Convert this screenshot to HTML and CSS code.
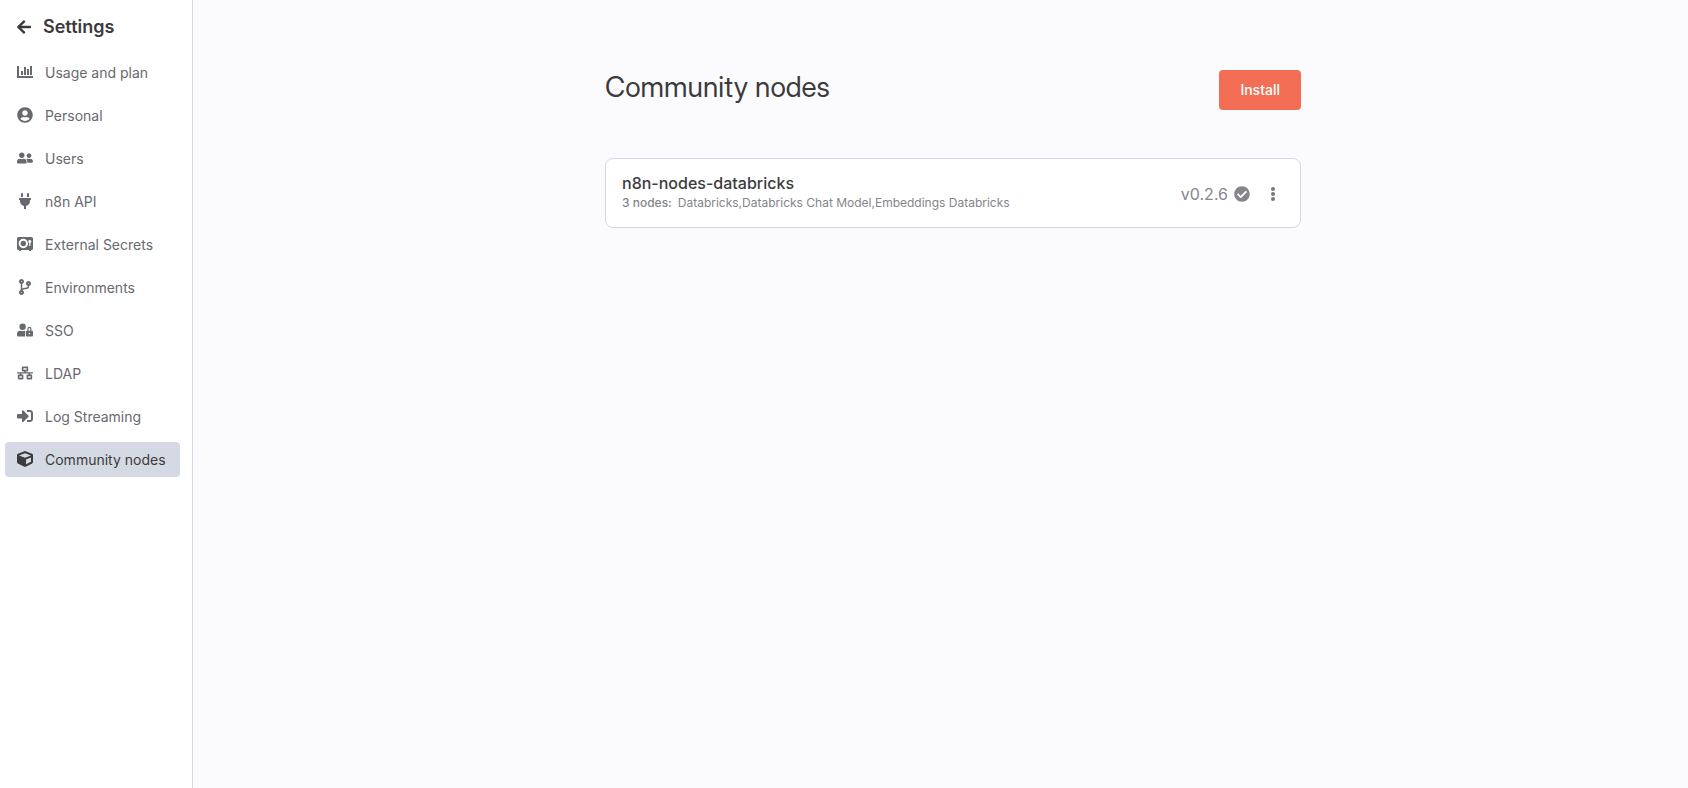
FILE: index.html
```
<!DOCTYPE html>
<html lang="en">
<head>
<meta charset="utf-8">
<title>Settings - Community nodes</title>
<link rel="stylesheet" href="styles.css">
</head>
<body>
<div class="app">
  <aside class="sidebar">
    <button class="back" type="button">
      <svg class="back-icon" viewBox="0 0 448 512" aria-hidden="true"><path d="M257.5 445.1l-22.2 22.2c-9.4 9.4-24.6 9.4-33.9 0L7 273c-9.4-9.4-9.4-24.6 0-33.9L201.4 44.7c9.4-9.4 24.6-9.4 33.9 0l22.2 22.2c9.5 9.5 9.3 25-.4 34.3L136.6 216H424c13.3 0 24 10.7 24 24v32c0 13.3-10.7 24-24 24H136.6l120.5 114.8c9.8 9.3 10 24.8.4 34.3z"/></svg>
      <span>Settings</span>
    </button>
    <nav class="menu">
      <a class="item" href="#usage"><svg class="icon" viewBox="0 0 16 16" aria-hidden="true"><path d="M0 2h2v10h14v2H0zM4 7h2v4H4zM7 3h2v8H7zM10 5h2v6h-2zM13 2h2v9h-2z"/></svg>Usage and plan</a>
      <a class="item" href="#personal"><svg class="icon" viewBox="0 0 496 512" aria-hidden="true"><path d="M248 8C111 8 0 119 0 256s111 248 248 248 248-111 248-248S385 8 248 8zm0 96c48.6 0 88 39.4 88 88s-39.4 88-88 88-88-39.4-88-88 39.4-88 88-88zm0 344c-58.7 0-111.3-26.6-146.5-68.2 18.8-35.4 55.6-59.8 98.5-59.8 2.4 0 4.8.4 7.1 1.1 13 4.2 26.6 6.9 40.9 6.9 14.3 0 28-2.7 40.9-6.9 2.3-.7 4.7-1.1 7.1-1.1 42.9 0 79.7 24.4 98.5 59.8C359.3 421.4 306.7 448 248 448z"/></svg>Personal</a>
      <a class="item" href="#users"><svg class="icon" viewBox="0 0 640 512" aria-hidden="true"><path d="M192 256c61.9 0 112-50.1 112-112S253.9 32 192 32 80 82.1 80 144s50.1 112 112 112zm76.8 32h-8.3c-20.8 10-43.9 16-68.5 16s-47.6-6-68.5-16h-8.3C51.6 288 0 339.6 0 403.2V432c0 26.5 21.5 48 48 48h288c26.5 0 48-21.5 48-48v-28.8c0-63.6-51.6-115.2-115.2-115.2zM480 256c53 0 96-43 96-96s-43-96-96-96-96 43-96 96 43 96 96 96zm48 32h-3.8c-13.9 4.8-28.6 8-44.2 8s-30.3-3.2-44.2-8H432c-20.4 0-39.2 5.9-55.7 15.4 24.4 26.3 39.7 61.2 39.7 99.8v38.4c0 2.2-.5 4.3-.6 6.4H592c26.5 0 48-21.5 48-48 0-61.9-50.1-112-112-112z"/></svg>Users</a>
      <a class="item" href="#api"><svg class="icon" viewBox="0 0 384 512" aria-hidden="true"><path d="M320 32a32 32 0 0 0-64 0v96h64zm48 128H16A16 16 0 0 0 0 176v32a16 16 0 0 0 16 16h16v32a160.07 160.07 0 0 0 128 156.8V512h64v-99.2A160.07 160.07 0 0 0 352 256v-32h16a16 16 0 0 0 16-16v-32a16 16 0 0 0-16-16zM128 32a32 32 0 0 0-64 0v96h64z"/></svg>n8n API</a>
      <a class="item" href="#secrets"><svg class="icon" viewBox="0 0 16 16" aria-hidden="true"><path fill-rule="evenodd" d="M1.5 1h13A1.5 1.5 0 0 1 16 2.5v10a1.5 1.5 0 0 1-1.5 1.5H14v1h-2v-1H4v1H2v-1h-.5A1.5 1.5 0 0 1 0 12.5v-10A1.5 1.5 0 0 1 1.5 1zM6.3 2.8a4.7 4.7 0 1 0 0 9.4 4.7 4.7 0 0 0 0-9.4zm0 2a2.7 2.7 0 1 1 0 5.4 2.7 2.7 0 0 1 0-5.4zM12.8 4a1.5 1.5 0 0 0-.6 2.9V10h1.2V6.9A1.5 1.5 0 0 0 12.8 4z"/></svg>External Secrets</a>
      <a class="item" href="#environments"><svg class="icon" viewBox="0 0 384 512" aria-hidden="true"><path d="M384 144c0-44.2-35.8-80-80-80s-80 35.8-80 80c0 36.4 24.3 67.1 57.5 76.8-.6 16.1-4.2 28.5-11 36.9-15.4 19.2-49.3 22.4-85.2 25.7-28.2 2.6-57.4 5.4-81.3 16.9v-144c32.5-10.2 56-40.5 56-76.3 0-44.2-35.8-80-80-80S0 35.8 0 80c0 35.8 23.5 66.1 56 76.3v199.3C23.5 365.9 0 396.2 0 432c0 44.2 35.8 80 80 80s80-35.8 80-80c0-34-21.2-63.1-51.2-74.6 3.1-5.2 7.8-9.8 14.9-13.4 16.2-8.2 40.4-10.4 66.1-12.8 42.2-3.9 90-8.4 118.2-43.4 14-17.4 21.1-39.8 21.6-67.9 31.6-10.8 54.4-40.7 54.4-75.9zM80 64c8.8 0 16 7.2 16 16s-7.2 16-16 16-16-7.2-16-16 7.2-16 16-16zm0 384c-8.8 0-16-7.2-16-16s7.2-16 16-16 16 7.2 16 16-7.2 16-16 16zm224-320c8.8 0 16 7.2 16 16s-7.2 16-16 16-16-7.2-16-16 7.2-16 16-16z"/></svg>Environments</a>
      <a class="item" href="#sso"><svg class="icon" viewBox="0 0 640 512" aria-hidden="true"><path d="M224 256A128 128 0 1 0 96 128a128 128 0 0 0 128 128zm96 64a63.08 63.08 0 0 1 8.1-30.5c-4.8-.5-9.5-1.5-14.5-1.5h-16.7a174.08 174.08 0 0 1-145.8 0h-16.7A134.43 134.43 0 0 0 0 422.4V464a48 48 0 0 0 48 48h280.9a63.54 63.54 0 0 1-8.9-32zm288-32h-32v-80a80 80 0 0 0-160 0v80h-32a32 32 0 0 0-32 32v160a32 32 0 0 0 32 32h224a32 32 0 0 0 32-32V320a32 32 0 0 0-32-32zM496 432a32 32 0 1 1 32-32 32 32 0 0 1-32 32zm32-144h-64v-80a32 32 0 0 1 64 0z"/></svg>SSO</a>
      <a class="item" href="#ldap"><svg class="icon" viewBox="0 0 640 512" aria-hidden="true"><path fill-rule="evenodd" d="M224 0h192a32 32 0 0 1 32 32v128a32 32 0 0 1-32 32h-64v32h288v48H528v48h48a32 32 0 0 1 32 32v128a32 32 0 0 1-32 32H416a32 32 0 0 1-32-32V352a32 32 0 0 1 32-32h48v-48H176v48h48a32 32 0 0 1 32 32v128a32 32 0 0 1-32 32H64a32 32 0 0 1-32-32V352a32 32 0 0 1 32-32h48v-48H0v-48h288v-32h-64a32 32 0 0 1-32-32V32a32 32 0 0 1 32-32zm32 64v64h128V64zM96 384v64h96v-64zm352 0v64h96v-64z"/></svg>LDAP</a>
      <a class="item" href="#logs"><svg class="icon" viewBox="0 0 512 512" aria-hidden="true"><path d="M416 448h-84c-6.6 0-12-5.4-12-12v-40c0-6.6 5.4-12 12-12h84c17.7 0 32-14.3 32-32V160c0-17.7-14.3-32-32-32h-84c-6.6 0-12-5.4-12-12V76c0-6.6 5.4-12 12-12h84c53 0 96 43 96 96v192c0 53-43 96-96 96zm-47-201L201 79c-15-15-41-4.5-41 17v96H24c-13.3 0-24 10.7-24 24v96c0 13.3 10.7 24 24 24h136v96c0 21.5 26 32 41 17l168-168c9.3-9.4 9.3-24.6 0-34z"/></svg>Log Streaming</a>
      <a class="item active" href="#community" aria-current="page"><svg class="icon" viewBox="0 0 512 512" aria-hidden="true"><path d="M239.1 6.3l-208 78c-18.7 7-31.1 25-31.1 45v225.1c0 18.2 10.3 34.8 26.5 42.9l208 104c13.5 6.8 29.4 6.8 42.9 0l208-104c16.3-8.1 26.5-24.8 26.5-42.9V129.3c0-20-12.4-37.9-31.1-44.9l-208-78C262 2.2 250 2.2 239.1 6.3zM256 68.4l192 72v1.1l-192 78-192-78v-1.1l192-72zm32 356V275.5l160-65v133.9l-160 80z"/></svg>Community nodes</a>
    </nav>
  </aside>
  <main class="main">
    <div class="content">
      <header class="heading">
        <h1>Community nodes</h1>
        <button class="install" type="button">Install</button>
      </header>
      <article class="card">
        <div class="info">
          <h2>n8n-nodes-databricks</h2>
          <p><strong>3 nodes:</strong><span>Databricks,Databricks Chat Model,Embeddings Databricks</span></p>
        </div>
        <div class="status">
          <span>v0.2.6</span>
          <svg class="check" viewBox="0 0 512 512" role="img" aria-label="Up to date"><path d="M504 256c0 136.967-111.033 248-248 248S8 392.967 8 256 119.033 8 256 8s248 111.033 248 248zM227.314 387.314l184-184c6.248-6.248 6.248-16.379 0-22.627l-22.627-22.627c-6.248-6.249-16.379-6.249-22.628 0L216 308.118l-70.059-70.059c-6.248-6.248-16.379-6.248-22.628 0l-22.627 22.627c-6.248 6.248-6.248 16.379 0 22.627l104 104c6.249 6.249 16.379 6.249 22.628.001z"/></svg>
          <button class="more" type="button" aria-label="More actions"><svg viewBox="0 0 4 14" aria-hidden="true"><circle cx="2" cy="2" r="2"/><circle cx="2" cy="7" r="2"/><circle cx="2" cy="12" r="2"/></svg></button>
        </div>
      </article>
    </div>
  </main>
</div>
</body>
</html>
```
FILE: styles.css
```
* {
  box-sizing: border-box;
}

body {
  margin: 0;
  font-family: Inter, "Liberation Sans", sans-serif;
  color: #3b3b3d;
  background: #fbfbfe;
}

button {
  font: inherit;
  border: 0;
  cursor: pointer;
}

svg {
  display: block;
  fill: currentColor;
}

h1,
h2,
p {
  margin: 0;
}

.app {
  display: flex;
  min-height: 100vh;
}

.sidebar {
  flex: none;
  width: 193px;
  padding: 15px 12px 12px 5px;
  background: #fff;
  border-right: 1px solid #d3d7e6;
}

.back {
  display: flex;
  align-items: center;
  gap: 12px;
  padding: 0 12px;
  background: none;
  color: #3b3b3d;
  font-size: 18px;
  font-weight: 600;
  line-height: 24px;
}

.back-icon {
  width: 14px;
  height: 16px;
}

.menu {
  display: flex;
  flex-direction: column;
  gap: 8px;
  margin-top: 16px;
}

.item {
  display: flex;
  align-items: center;
  gap: 12px;
  height: 35px;
  padding: 0 12px;
  border-radius: 4px;
  color: #68696f;
  font-size: 14px;
  text-decoration: none;
  white-space: nowrap;
}

.item.active {
  background: #d5d9e4;
  color: #3b3b3d;
}

.icon {
  flex: none;
  width: 16px;
  height: 16px;
  margin-bottom: 2px;
}

.main {
  flex: 1;
  padding: 70px 0 32px 25px;
}

.content {
  max-width: 696px;
  margin: 0 auto;
}

.heading {
  display: flex;
  align-items: flex-start;
  justify-content: space-between;
}

h1 {
  font-family: "Inter Display", Inter, "Liberation Sans", sans-serif;
  font-size: 28px;
  font-weight: 400;
  font-variation-settings: "opsz" 28;
  line-height: 35px;
}

.install {
  height: 40px;
  padding: 0 21px 2px;
  border-radius: 4px;
  background: #f36e55;
  color: #fff;
  font-size: 14px;
  font-weight: 500;
}

.card {
  display: flex;
  align-items: center;
  justify-content: space-between;
  margin-top: 48px;
  padding: 15px 16px 13px;
  background: #fff;
  border: 1px solid #d5d7e6;
  border-radius: 8px;
}

h2 {
  font-size: 16px;
  font-weight: 500;
  line-height: 18px;
}

.info p {
  display: flex;
  gap: 6px;
  color: #84858c;
  font-size: 12px;
  line-height: 22px;
}

strong {
  font-weight: 500;
}

.status {
  display: flex;
  align-items: center;
  gap: 6px;
  color: #84858c;
  font-size: 16px;
}

.check {
  width: 16px;
  height: 16px;
}

.more {
  padding: 8px 9px 8px 8px;
  margin-left: 7px;
  background: none;
  color: #77787f;
}

.more svg {
  width: 4px;
  height: 14px;
}
```
